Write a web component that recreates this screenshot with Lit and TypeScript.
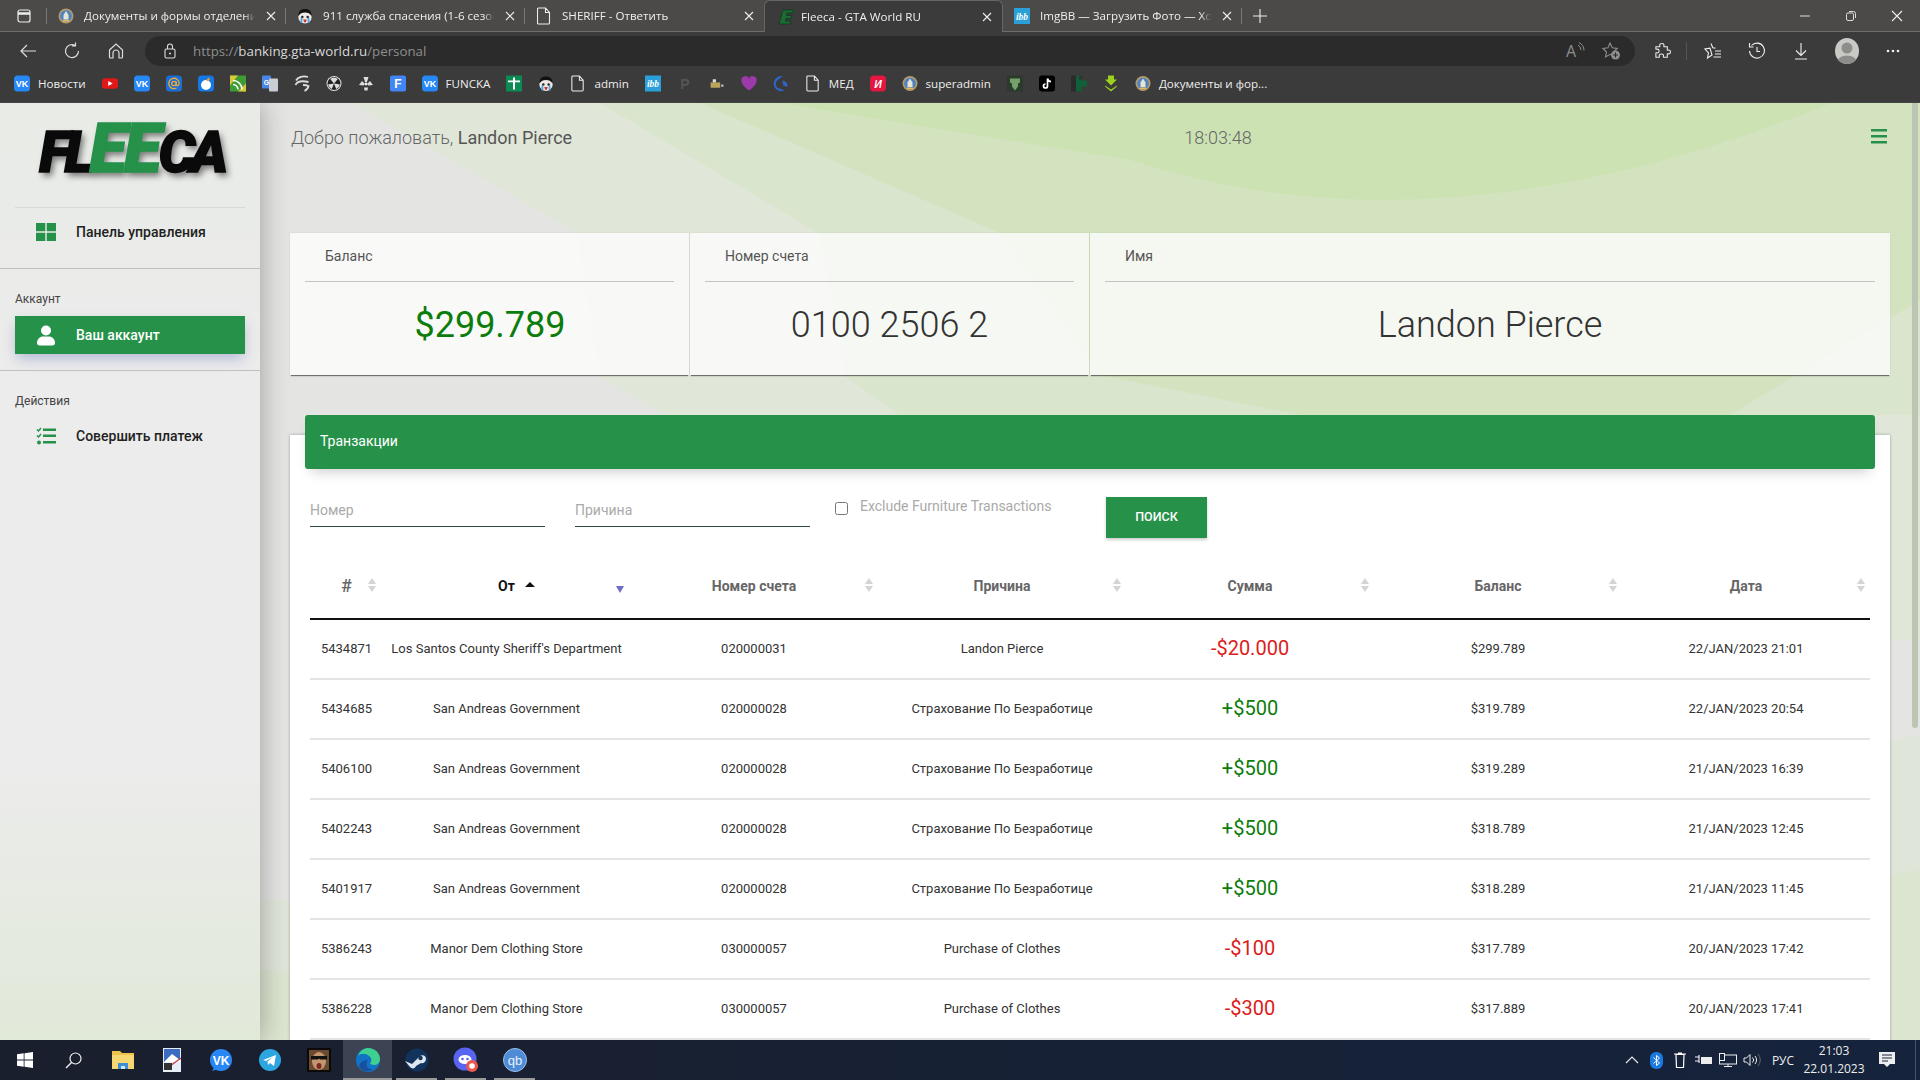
import { LitElement, html, css } from "lit";
import { customElement } from "lit/decorators.js";

const ic: Record<string, any> = {
  seal: html`<svg width="16" height="16" viewBox="0 0 16 16"><circle cx="8" cy="8" r="7.500" fill="#b79a6a"/><circle cx="8" cy="8" r="5.800" fill="#4d83c4"/><path d="M8 3l2.500 4v4.500h-5V7z" fill="#e8e4d2"/><path d="M5 12h6v1.500H5z" fill="#e0bf5a"/></svg>`,
  face: html`<svg width="16" height="16" viewBox="0 0 18 18"><circle cx="9" cy="10" r="7.500" fill="#efe8e4"/><path d="M1.500 9C1.500 3 5 1 9 1s7.500 2 7.500 8c-2-3-4-4-7.500-4S3.500 6 1.500 9z" fill="#111"/><circle cx="6" cy="10" r="1.400" fill="#222"/><circle cx="12" cy="10" r="1.400" fill="#222"/><path d="M4 11h2v6H4zM12 11h2v6h-2z" fill="#4aa6e0"/><path d="M7 13h4l-1 3H8z" fill="#c33"/></svg>`,
  doc: html`<svg width="14" height="18" viewBox="0 0 14 18"><path d="M1.500 1h7l4 4.500V16a1 1 0 0 1-1 1h-10a1 1 0 0 1-1-1V2a1 1 0 0 1 1-1zM8.500 1v4.500h4" fill="none" stroke="#eee" stroke-width="1.100"/></svg>`,
  fleeca: html`<svg width="18" height="18" viewBox="0 0 18 18"><path d="M5 2h11l-1 3H9l-.5 2.500H14l-1 3H8L7.500 13H13l-1 3H1z" fill="#1d6b34" stroke="#0c3a1c" stroke-width=".8"/></svg>`,
  ibb: html`<svg width="16" height="16" viewBox="0 0 17 17"><rect width="17" height="17" fill="#2a9fd8"/><text x="8.500" y="12.500" font-size="10" font-style="italic" font-weight="700" text-anchor="middle" fill="#fff" font-family="Liberation Serif">ibb</text></svg>`,
  vk: html`<svg width="16" height="16" viewBox="0 0 16 16"><rect width="16" height="16" rx="3.500" fill="#2787f5"/><text x="8" y="11.500" font-size="9" font-weight="700" text-anchor="middle" fill="#fff" font-family="Liberation Sans">VK</text></svg>`,
  yt: html`<svg width="16" height="16" viewBox="0 0 18 16"><rect y="2" width="18" height="12" rx="3.500" fill="#e21818"/><path d="M7 5.200l5 2.800-5 2.800z" fill="#fff"/></svg>`,
  at: html`<svg width="16" height="16" viewBox="0 0 16 16"><rect width="16" height="16" rx="3.500" fill="#1c6fd6"/><circle cx="8" cy="8" r="2.200" fill="none" stroke="#f2a92c" stroke-width="1.300"/><path d="M10.200 6v3c0 2 3 1.500 3-1.200A5.200 5.200 0 1 0 10.500 12.500" fill="none" stroke="#f2a92c" stroke-width="1.300"/></svg>`,
  bubble: html`<svg width="16" height="16" viewBox="0 0 16 16"><rect width="16" height="16" rx="3.500" fill="#1678e5"/><circle cx="8" cy="9.500" r="5" fill="#fff"/><path d="M8 4.500l3-2.500 1 2-2 2z" fill="#f29a2e"/></svg>`,
  gr: html`<svg width="16" height="16" viewBox="0 0 16 16"><rect width="16" height="16" fill="#3e9c35"/><path d="M0 0h8L0 10zM16 16H8l8-8z" fill="#d9c93a"/><path d="M3 5a9 9 0 0 1 9 9M3 9a5 5 0 0 1 5 5" fill="none" stroke="#fff" stroke-width="1.500"/></svg>`,
  gt: html`<svg width="16" height="16" viewBox="0 0 16 16"><rect width="9" height="13" rx="1" fill="#4a86e8"/><rect x="7" y="3" width="9" height="13" rx="1" fill="#c9cdd4"/><text x="4.500" y="9" font-size="7" font-weight="700" text-anchor="middle" fill="#fff" font-family="Liberation Sans">G</text></svg>`,
  g: html`<svg width="16" height="16" viewBox="0 0 16 16"><path d="M2 5C4 1.500 9 0 14 1.500M1.500 9.500C3 6 8 5 14.500 6.500M9 9.500c2.500 0 4.500.5 5.500 1-.5 2.500-2 4-4 5" fill="none" stroke="#ddd" stroke-width="1.800"/></svg>`,
  rad: html`<svg width="16" height="16" viewBox="0 0 16 16"><circle cx="8" cy="8" r="7.500" fill="#ddd"/><circle cx="8" cy="8" r="6.500" fill="#222"/><path d="M8 8L4.200 3.500a6 6 0 0 1 7.600 0zM8 8l6 1a6 6 0 0 1-3.800 4.500zM8 8l-2.200 5.500A6 6 0 0 1 2 9z" fill="#ddd"/></svg>`,
  nuke: html`<svg width="16" height="16" viewBox="0 0 16 16"><circle cx="8" cy="8.500" r="1.400" fill="#eee"/><path d="M5.500 1.500h5L9 6.500H7zM1 9.500l3-4 3 3-1.500 1.500zM15 9.500l-3-4-3 3 1.500 1.500zM6 12l4 0-.5 3h-3z" fill="#ddd"/></svg>`,
  f: html`<svg width="16" height="16" viewBox="0 0 16 16"><rect width="16" height="16" rx="2" fill="#4285f4"/><text x="8" y="12.500" font-size="12" font-weight="700" text-anchor="middle" fill="#fff" font-family="Liberation Sans">F</text></svg>`,
  cross: html`<svg width="16" height="16" viewBox="0 0 16 16"><rect width="16" height="16" fill="#0d8a54"/><path d="M2 5h12v1.800H9V14H7V6.800H2zM7 2h2v3H7z" fill="#fff"/></svg>`,
  p: html`<svg width="16" height="16" viewBox="0 0 16 16"><text x="8" y="13" font-size="14" font-weight="700" text-anchor="middle" fill="#555" font-family="Liberation Sans">P</text></svg>`,
  small: html`<svg width="14" height="16" viewBox="0 0 14 16"><rect x="1" y="7" width="9" height="5" fill="#b9a45a"/><rect x="3" y="4" width="3" height="3" fill="#ddd"/><rect x="11" y="9" width="2" height="2" fill="#ccc"/></svg>`,
  heart: html`<svg width="17" height="17" viewBox="0 0 17 17"><path d="M8.500 16C3 11.500.5 9 .5 5.500A4 4 0 0 1 8.500 4a4 4 0 0 1 8 1.500C16.500 9 14 11.500 8.500 16z" fill="#9b3aa8"/></svg>`,
  swirl: html`<svg width="17" height="17" viewBox="0 0 17 17"><path d="M11 1a8 8 0 1 0 1 15L8 14c-3 0-5-2-5-5 0-3 3-6 8-8z" fill="#2f64c8"/><path d="M10 5l1 6 4 1c1-3 0-5-5-7z" fill="#2f64c8"/></svg>`,
  red: html`<svg width="16" height="16" viewBox="0 0 16 16"><rect width="16" height="16" rx="4" fill="#e3173f"/><text x="8" y="12" font-size="10.500" font-weight="700" font-style="italic" text-anchor="middle" fill="#fff" font-family="Liberation Sans">И</text></svg>`,
  shield: html`<svg width="16" height="16" viewBox="0 0 16 16"><rect width="16" height="16" fill="#2c3a2c"/><path d="M3 3h10v4l-2 1v3l-3 4-3-4V8L3 7z" fill="#74a06c"/></svg>`,
  tiktok: html`<svg width="16" height="16" viewBox="0 0 16 16"><rect width="16" height="16" rx="3" fill="#000"/><path d="M8.500 3v7.500a2 2 0 1 1-2-2M8.500 3c.3 2 1.500 3 3.500 3.200" fill="none" stroke="#fff" stroke-width="1.700"/></svg>`,
  dk: html`<svg width="16" height="16" viewBox="0 0 16 16"><rect width="5" height="16" fill="#2b2b2b"/><rect x="5" width="6" height="16" fill="#0f5f38"/><rect x="9" y="5" width="7" height="6" fill="#0f5f38"/><rect x="8" width="3" height="4" fill="#333"/></svg>`,
  arrow: html`<svg width="16" height="16" viewBox="0 0 16 16"><path d="M5 0h6v4h3L8 10 2 4h3zM2 11l6 5 6-5v-1l-6 4-6-4z" fill="#9ed11f"/></svg>`,
};

const bookmarks: [string, string?][] = [
  ["vk", "Новости"], ["yt"], ["vk"], ["at"], ["bubble"], ["gr"], ["gt"], ["g"], ["rad"], ["nuke"], ["f"],
  ["vk", "FUNCKA"], ["cross"], ["face"], ["doc", "admin"], ["ibb"], ["p"], ["small"], ["heart"], ["swirl"],
  ["doc", "МЕД"], ["red"], ["seal", "superadmin"], ["shield"], ["tiktok"], ["dk"], ["arrow"], ["seal", "Документы и фор..."],
];

const tabs = [
  { icon: "seal", t: "Документы и формы отделения", c: "" },
  { icon: "face", t: "911 служба спасения (1-6 сезон", c: "" },
  { icon: "doc", t: "SHERIFF - Ответить", c: "docTab noSep" },
  { icon: "fleeca", t: "Fleeca - GTA World RU", c: "active" },
  { icon: "ibb", t: "ImgBB — Загрузить Фото — Хос", c: "" },
];

const SA = "San Andreas Government", MD = "Manor Dem Clothing Store", SI = "Страхование По Безработице", PC = "Purchase of Clothes";
const rows = [
  ["5434871", "Los Santos County Sheriff's Department", "020000031", "Landon Pierce", "-$20.000", "$299.789", "22/JAN/2023 21:01"],
  ["5434685", SA, "020000028", SI, "+$500", "$319.789", "22/JAN/2023 20:54"],
  ["5406100", SA, "020000028", SI, "+$500", "$319.289", "21/JAN/2023 16:39"],
  ["5402243", SA, "020000028", SI, "+$500", "$318.789", "21/JAN/2023 12:45"],
  ["5401917", SA, "020000028", SI, "+$500", "$318.289", "21/JAN/2023 11:45"],
  ["5386243", MD, "030000057", PC, "-$100", "$317.789", "20/JAN/2023 17:42"],
  ["5386228", MD, "030000057", PC, "-$300", "$317.889", "20/JAN/2023 17:41"],
];
const heads = ["#", "От", "Номер счета", "Причина", "Сумма", "Баланс", "Дата"];

@customElement("app-root")
export class AppRoot extends LitElement {
  static styles = css`
    :host { display: flex; flex-direction: column; width: 1920px; height: 1080px; overflow: hidden; font-family: Roboto, "Liberation Sans", sans-serif; background: #3b3b3b; }
    svg { display: block; flex: none; }
    /* browser chrome */
    .strip { height: 32px; background: #4b4a48; box-sizing: border-box; border-bottom: 1px solid #6e6e6a; display: flex; align-items: stretch; flex: none; color: #eee; font: 11.600px "Open Sans", sans-serif; }
    .winbtn { width: 47px; flex: none; display: flex; align-items: center; justify-content: center; position: relative; }
    .winbtn::after, .tab::after { content: ""; position: absolute; right: 0; top: 8px; height: 16px; width: 1px; background: #777; }
    .tab { width: 239px; flex: none; box-sizing: border-box; position: relative; display: flex; align-items: center; gap: 10px; padding: 0 9px 0 11px; }
    .tab .name { flex: 1; min-width: 0; white-space: nowrap; -webkit-mask: linear-gradient(90deg, #000 94%, transparent) no-repeat; mask: linear-gradient(90deg, #000 94%, transparent) no-repeat; }
    .tab.docTab { padding-left: 12px; gap: 11px; }
    .tab.active { background: #3b3b3b; height: 32px; border: 1px solid #666; border-bottom: 0; border-radius: 6px 6px 0 0; padding-left: 13px; gap: 5px; }
    .tab.active::after, .tab.noSep::after { display: none; }
    .plus { width: 36px; display: flex; align-items: center; justify-content: center; }
    .spacer { flex: 1; }
    .wc { display: flex; align-items: center; justify-content: center; width: 46px; }
    .toolbar { height: 34px; flex: none; display: flex; align-items: flex-end; background: #3b3b3b; }
    .tb { width: 44px; height: 30px; display: flex; align-items: center; justify-content: center; flex: none; }
    .nav { display: flex; padding-left: 6px; width: 145px; flex: none; box-sizing: border-box; }
    .addr { width: 1490px; height: 30px; box-sizing: border-box; flex: none; background: #2b2b2b; border-radius: 15px; display: flex; align-items: center; padding: 0 13px 0 18px; gap: 16px; color: #8e8e8e; font: 13.300px "Open Sans", sans-serif; }
    .addr b { font-weight: 400; color: #d8d8d8; }
    .addr .url { flex: 1; }
    .addr .ai { display: flex; gap: 16px; align-items: center; }
    .tright { display: flex; align-items: center; height: 30px; padding-left: 6px; }
    .vsep { width: 1px; height: 18px; background: #555; margin: 0 4px 0 1px; flex: none; }
    .tb.av { width: 48px; }
    .avatar { width: 24px; height: 26px; border-radius: 50%; background: #c9c9c5; overflow: hidden; }
    .bm { height: 37px; box-sizing: border-box; flex: none; background: #3b3b3b; border-bottom: 1px solid #444; padding: 0 0 2px 6px; display: flex; align-items: center; color: #eee; font: 11.600px "Open Sans", sans-serif; }
    .bi { display: flex; align-items: center; gap: 8px; padding: 0 8px; white-space: nowrap; justify-content: center; height: 100%; }
    .bi svg { width: 16px; height: 17px; }
    /* page */
    .page { flex: 1; min-height: 0; display: flex; position: relative; overflow: hidden; }
    .bg { position: absolute; left: 0; top: 0; }
    .side { position: relative; width: 260px; flex: none; box-shadow: 0 0 26px rgba(0, 0, 0, .32); background: linear-gradient(180deg, #e8ebe6 0, #ececec 30%, #ececec 70%, #e1e9d9 100%); display: flex; flex-direction: column; color: #333; }
    .logo { height: 105px; box-sizing: border-box; margin: 0 15px; border-bottom: 1px solid #d8d8d8; display: flex; justify-content: center; align-items: center; padding: 0 0 13px 2px; }
    .mark { font: italic 900 58px/1 Roboto, sans-serif; color: #0a0a0a; letter-spacing: -5.500px; text-shadow: 3px 4px 6px rgba(0, 0, 0, .5); -webkit-text-stroke: 1.500px #0a0a0a; }
    .mark em { color: #259149; font-size: 69px; -webkit-text-stroke: 1.500px #259149; letter-spacing: -3px; }
    .item { height: 38px; margin: 0 15px; display: flex; align-items: center; font-size: 14px; font-weight: 500; color: #222; }
    .item .ii { width: 61px; padding-left: 21px; box-sizing: border-box; flex: none; }
    .item.first { margin-top: 5px; }
    .item.on { background: #259149; color: #fff; box-shadow: 0 6px 14px -2px rgba(60, 80, 170, .35); }
    .hr { height: 1px; background: #c0c0c0; margin-top: 16px; }
    .hr.a { margin-top: 17px; }
    .cap { font-size: 12px; color: #444; margin: 22px 15px 0; height: 25px; line-height: 16px; }
    .cap.two { height: 24px; }
    .main { position: relative; flex: 1; min-width: 0; padding: 0 30px; }
    .top { height: 130px; display: grid; grid-template-columns: 827px 200px 1fr; padding: 23px 0 0 1px; box-sizing: border-box; font-size: 18px; line-height: 24px; font-weight: 300; color: #666; }
    .top strong { font-weight: 400; color: #555; }
    .clock { text-align: center; }
    .burger { justify-self: end; margin: 3px 3px 0 0; }
    .cards { display: grid; grid-template-columns: 399px 399px 1fr; gap: 1px; height: 142px; }
    .card { background: rgba(255, 255, 255, .76); box-shadow: 0 2px 1px -1px rgba(0, 0, 0, .5), 0 0 1px rgba(0, 0, 0, .14); padding: 0 15px; display: flex; flex-direction: column; }
    .card h4 { margin: 0; height: 49px; box-sizing: border-box; border-bottom: 1px solid #c4c4c4; padding-left: 20px; font-size: 14px; font-weight: 400; line-height: 46px; color: #555; }
    .card .val { flex: 1; display: flex; align-items: center; justify-content: center; padding-bottom: 8px; font-size: 36px; font-weight: 300; color: #333; }
    .card .val.g { color: #0c7d0c; font-weight: 400; padding-left: 1px; }
    .panel { margin-top: 60px; background: #fff; padding: 0 15px 40px; box-shadow: 0 0 3px rgba(0, 0, 0, .3); }
    .head { position: relative; top: -20px; margin-bottom: -20px; height: 54px; line-height: 52px; padding-left: 15px; background: #259149; color: #fff; border-radius: 3px; font-size: 14px; box-shadow: 0 8px 14px -6px rgba(0, 0, 0, .22); }
    .filters { display: flex; align-items: flex-start; height: 84px; box-sizing: border-box; padding: 26px 5px 0; }
    .inp { width: 235px; height: 32px; box-sizing: border-box; border-bottom: 1px solid #2f4a44; font-size: 14px; color: #aaa; line-height: 30px; }
    .inp.b { margin-left: 30px; }
    .chk { margin-left: 25px; width: 271px; display: flex; gap: 12px; font-size: 14px; color: #aaa; line-height: 22px; }
    .box { width: 13px; height: 13px; box-sizing: border-box; border: 1px solid #767676; border-radius: 2.500px; margin-top: 7px; background: #fff; flex: none; }
    .btn { width: 101px; height: 41px; box-sizing: border-box; padding-bottom: 2px; margin-top: 2px; background: #259149; color: #fff; display: flex; align-items: center; justify-content: center; font-size: 12.500px; font-weight: 500; box-shadow: 0 2px 3px rgba(0, 0, 0, .2); }
    table { width: 1560px; margin-left: 5px; border-collapse: collapse; table-layout: fixed; }
    th { height: 65px; position: relative; padding: 0; font-size: 14px; font-weight: 700; color: #666; border-bottom: 2px solid #111; text-align: center; }
    th.hash { font-size: 18px; font-weight: 500; }
    th.hash .sort { right: 7px; }
    th.from { color: #111; }
    th.from span { position: relative; }
    td { height: 56px; padding: 0 0 2px; box-sizing: content-box; border-bottom: 2px solid #e4e4e4; text-align: center; font-size: 13px; color: #333; white-space: nowrap; }
    td.amt { font-size: 20px; }
    td.neg { color: #dc1c1c; }
    td.pos { color: #0c7d0c; }
    .sort { position: absolute; right: 5px; top: 25px; width: 8px; height: 14px; }
    .sort i, .sort b { position: absolute; left: 0; border-left: 4px solid transparent; border-right: 4px solid transparent; }
    .sort i { top: 0; border-bottom: 6px solid #d4d4d4; }
    .sort b { bottom: 0; border-top: 6px solid #d4d4d4; }
    .asc { position: absolute; left: calc(100% + 10px); top: 4px; border-left: 5px solid transparent; border-right: 5px solid transparent; border-bottom: 5px solid #111; }
    .desc { position: absolute; right: 6px; top: 33px; border-left: 4px solid transparent; border-right: 4px solid transparent; border-top: 7px solid #6f6fc9; }
    .thumb { position: absolute; right: 2px; top: 0; width: 6px; height: 625px; background: #bcc4b4; border-radius: 0 0 3px 3px; }
    /* taskbar */
    .task { height: 40px; flex: none; background: linear-gradient(90deg, #1a1f2d, #15233c); display: flex; align-items: center; position: relative; color: #eee; font: 12px "Open Sans", sans-serif; }
    .ticon { width: 49px; height: 40px; display: flex; align-items: center; justify-content: center; flex: none; box-sizing: border-box; position: relative; }
    .ticon.on { background: #3c4352; }
    .ticon.run::after { content: ""; position: absolute; left: 4px; right: 4px; bottom: 0; height: 2px; background: #9a9a9a; }
    .ticon.on::after { left: 0; right: 0; }
    .tray { display: flex; align-items: center; margin-left: auto; height: 100%; }
    .tr { width: 24px; display: flex; justify-content: center; }
    .lang { width: 38px; text-align: center; }
    .time { width: 64px; text-align: center; line-height: 18px; white-space: nowrap; }
    .note { width: 40px; margin: 0 8px 0 1px; display: flex; justify-content: center; }
    .edge { width: 1px; height: 40px; background: #4a5262; margin-right: 4px; }
  `;

  render() {
    return html`
      <div class="strip">
        <div class="winbtn"><svg width="16" height="16" viewBox="0 0 16 16"><rect x="2" y="2" width="12" height="12" rx="2" fill="none" stroke="#eee" stroke-width="1.200"/><path d="M2 5.500h12" stroke="#eee" stroke-width="2.500"/></svg></div>
        ${tabs.map((t) => html`<div class="tab ${t.c}">${ic[t.icon]}<span class="name">${t.t}</span>
          <svg width="12" height="12" viewBox="0 0 12 12"><path d="M2 2l8 8M10 2l-8 8" stroke="#eee" stroke-width="1.100"/></svg></div>`)}
        <div class="plus"><svg width="14" height="14" viewBox="0 0 14 14"><path d="M7 0v14M0 7h14" stroke="#eee" stroke-width="1.100"/></svg></div>
        <div class="spacer"></div>
        <div class="wc"><svg width="12" height="12" viewBox="0 0 12 12"><path d="M1 6h10" stroke="#ddd"/></svg></div>
        <div class="wc"><svg width="12" height="12" viewBox="0 0 12 12"><rect x="1.500" y="3" width="7" height="7.500" rx="1.500" fill="none" stroke="#ddd"/><path d="M4 1.500h4.500a2 2 0 0 1 2 2V8" fill="none" stroke="#ddd"/></svg></div>
        <div class="wc"><svg width="12" height="12" viewBox="0 0 12 12"><path d="M1 1l10 10M11 1L1 11" stroke="#eee" stroke-width="1.100"/></svg></div>
      </div>
      <div class="toolbar">
        <div class="nav">
          <div class="tb"><svg width="18" height="16" viewBox="0 0 18 16"><path d="M17 8H2M8 2L2 8l6 6" fill="none" stroke="#ddd" stroke-width="1.200"/></svg></div>
          <div class="tb"><svg width="18" height="18" viewBox="0 0 18 18"><path d="M15.500 9A6.500 6.500 0 1 1 12 3.300M12.500 .5v3.500H9" fill="none" stroke="#ddd" stroke-width="1.200"/></svg></div>
          <div class="tb"><svg width="18" height="18" viewBox="0 0 18 18"><path d="M2.500 8L9 2l6.500 6v7a1 1 0 0 1-1 1H12v-5a3 3 0 0 0-6 0v5H3.500a1 1 0 0 1-1-1z" fill="none" stroke="#ddd" stroke-width="1.200"/></svg></div>
        </div>
        <div class="addr">
          <svg width="14" height="16" viewBox="0 0 14 16"><rect x="2" y="6" width="10" height="9" rx="1.500" fill="none" stroke="#ddd" stroke-width="1.100"/><path d="M4.500 6V3.500a2.500 2.500 0 0 1 5 0V6" fill="none" stroke="#ddd" stroke-width="1.100"/><circle cx="7" cy="10.500" r="1" fill="#ddd"/></svg>
          <span class="url">https://<b>banking.gta-world.ru</b>/personal</span>
          <div class="ai">
            <svg width="20" height="24" viewBox="0 0 20 24"><text x="0" y="18" font-size="16" fill="#8e8e8e" font-family="Open Sans">A</text><path d="M12 6a6 6 0 0 1 3 5M13 3.500a9 9 0 0 1 5 8" fill="none" stroke="#8e8e8e"/></svg>
            <svg width="20" height="18" viewBox="0 0 20 18"><path d="M8 1l2.200 4.800 5 .6-3.700 3.500 1 5L8 12.300 3.500 15l1-5L1 6.400l5-.6z" fill="none" stroke="#8e8e8e" stroke-width="1.100"/><circle cx="13.500" cy="13" r="4.500" fill="#8e8e8e"/><path d="M13.500 10.500v5M11 13h5" stroke="#2b2b2b"/></svg>
          </div>
        </div>
        <div class="tright">
          <div class="tb"><svg width="18" height="18" viewBox="0 0 18 18"><path d="M6 3.500C6 1 10.500 1 10.500 3.500c0 .8-.5 1.200 0 1.500h3.500v3.500c.4.500.8 0 1.500 0 2.500 0 2.500 4 0 4-.7 0-1.100-.5-1.500 0V16h-4c-.5-.5 0-.8 0-1.500 0-2.500-4.500-2.500-4.500 0 0 .7.500 1 0 1.500H2v-4.500c.5-.5 1 0 1.500 0 2.500 0 2.500-4 0-4C3 7.500 2.500 8 2 7.500V5h4c.3-.5 0-.8 0-1.500z" fill="none" stroke="#eee" stroke-width="1.100" transform="scale(.95)"/></svg></div>
          <div class="vsep"></div>
          <div class="tb"><svg width="18" height="18" viewBox="0 0 18 18"><path d="M7 1.500l1.800 4.300 2.700.3M8 13l-4.500 3 1-5.200L1 7l5-.9zM11 9h6M11 12h6M9.500 15h7.500" fill="none" stroke="#eee" stroke-width="1.100"/></svg></div>
          <div class="tb"><svg width="18" height="18" viewBox="0 0 18 18"><path d="M3.500 3.500A7.500 7.500 0 1 1 1.500 9M1.500 1v4h4M9 5v4.500h3" fill="none" stroke="#eee" stroke-width="1.100"/></svg></div>
          <div class="tb"><svg width="14" height="18" viewBox="0 0 14 18"><path d="M7 1v12M2 8.500L7 13.500l5-5M1 17h12" fill="none" stroke="#eee" stroke-width="1.100"/></svg></div>
          <div class="tb av"><div class="avatar"><svg width="24" height="26" viewBox="0 0 24 26"><circle cx="12" cy="10" r="5.500" fill="#8d8d8b"/><ellipse cx="12" cy="24" rx="10" ry="6.500" fill="#8d8d8b"/></svg></div></div>
          <div class="tb"><svg width="14" height="4" viewBox="0 0 14 4"><circle cx="2" cy="2" r="1.300" fill="#eee"/><circle cx="7" cy="2" r="1.300" fill="#eee"/><circle cx="12" cy="2" r="1.300" fill="#eee"/></svg></div>
        </div>
      </div>
      <div class="bm">${bookmarks.map(([i, t]) => html`<div class="bi">${ic[i]}${t ? html`<span>${t}</span>` : ""}</div>`)}</div>

      <div class="page">
        <svg class="bg" width="1920" height="937" viewBox="0 103 1920 937">
          <rect y="103" width="1920" height="937" fill="#e4e5e3"/>
          <path d="M0 1040V900L800 900 1920 735V1040z" fill="#e0e5da"/>
          <path d="M0 1040V960L1000 1000 1920 870V1040z" fill="#dce5d0"/>
          <path d="M260 103H352L577 233 600 377 665 415 1000 640H1920V430L1920 103z" fill="#e0e6d8"/>
          <path d="M600 103L818 233 846 377 900 415H1920V103z" fill="#d9e5cc"/>
          <path d="M700 103L1000 233 1100 375 1300 415H1730L1920 300V103z" fill="#d3e3c0"/>
          <path d="M780 103L1130 160Q1440 262 1832 103z" fill="#cce2b3"/>
        </svg>
        <aside class="side">
          <div class="logo"><span class="mark">FL<em>EE</em>CA</span></div>
          <div class="item first"><div class="ii"><svg width="20" height="18" viewBox="0 0 20 18"><path d="M0 0h9.300v8.300H0zM10.700 0H20v8.300h-9.300zM0 9.700h9.300V18H0zM10.700 9.700H20V18h-9.300z" fill="#259149"/></svg></div>Панель управления</div>
          <div class="hr a"></div>
          <div class="cap">Аккаунт</div>
          <div class="item on"><div class="ii"><svg width="20" height="21" viewBox="0 0 20 21"><circle cx="10" cy="5.500" r="5" fill="#fff"/><path d="M1 18c0-4 3-6.500 6-6.500h6c3 0 6 2.500 6 6.500 0 1.500-1 2.500-2.500 2.500h-13C2 20.500 1 19.500 1 18z" fill="#fff"/></svg></div>Ваш аккаунт</div>
          <div class="hr"></div>
          <div class="cap two">Действия</div>
          <div class="item"><div class="ii"><svg width="20" height="18" viewBox="0 0 20 18"><path d="M1 2.500L2.500 4 5 1M1 8.500l1.500 1.500L5 7" fill="none" stroke="#259149" stroke-width="1.500"/><circle cx="3" cy="15.500" r="2" fill="#259149"/><path d="M7 1.500h13v2.500H7zM7 7.500h13v2.500H7zM7 14h13v2.500H7z" fill="#259149"/></svg></div>Совершить платеж</div>
        </aside>
        <main class="main">
          <div class="top">
            <div>Добро пожаловать, <strong>Landon Pierce</strong></div>
            <div class="clock">18:03:48</div>
            <div class="burger"><svg width="16" height="15" viewBox="0 0 16 15"><path d="M0 0h16v2.500H0zM0 6h16v2.500H0zM0 12h16v2.500H0z" fill="#259149"/></svg></div>
          </div>
          <div class="cards">
            <div class="card"><h4>Баланс</h4><div class="val g">$299.789</div></div>
            <div class="card"><h4>Номер счета</h4><div class="val">0100 2506 2</div></div>
            <div class="card"><h4>Имя</h4><div class="val">Landon Pierce</div></div>
          </div>
          <section class="panel">
            <div class="head">Транзакции</div>
            <div class="filters">
              <div class="inp">Номер</div>
              <div class="inp b">Причина</div>
              <div class="chk"><span class="box"></span><span>Exclude Furniture Transactions</span></div>
              <div class="btn">ПОИСК</div>
            </div>
            <table>
              <colgroup><col width="73"/><col width="247"/><col width="248"/><col width="248"/><col width="248"/><col width="248"/><col width="248"/></colgroup>
              <thead><tr>
                ${heads.map((h, i) => i === 1
                  ? html`<th class="from"><span>${h}<em class="asc"></em></span><em class="desc"></em></th>`
                  : html`<th class="${i === 0 ? "hash" : ""}">${h}<span class="sort"><i></i><b></b></span></th>`)}
              </tr></thead>
              <tbody>${rows.map((r) => html`<tr>${r.map((c, i) => html`<td class="${i === 4 ? (c[0] === "-" ? "amt neg" : "amt pos") : ""}">${c}</td>`)}</tr>`)}</tbody>
            </table>
          </section>
          <div class="thumb"></div>
        </main>
      </div>

      <div class="task">
        <div class="ticon"><svg width="16" height="16" viewBox="0 0 16 16"><path d="M0 2.300l6.700-1v6.200H0zM7.500 1.200L16 0v7.500H7.500zM0 8.500h6.700v6.200l-6.700-1zM7.500 8.500H16V16l-8.500-1.200z" fill="#fff"/></svg></div>
        <div class="ticon"><svg width="17" height="17" viewBox="0 0 17 17"><circle cx="10.500" cy="6.500" r="5.500" fill="none" stroke="#eee" stroke-width="1.200"/><path d="M6.500 10.500L1 16" stroke="#eee" stroke-width="1.400"/></svg></div>
        <div class="ticon"><svg width="22" height="20" viewBox="0 0 22 20"><path d="M0 1h8l2 2h12v16H0z" fill="#f0c14b"/><path d="M0 5h22v14H0z" fill="#f7d774"/><path d="M6 13h10v6H6z" fill="#3c8fd6"/><path d="M9 16h4v3H9z" fill="#cfe7f8"/></svg></div>
        <div class="ticon"><svg width="18" height="24" viewBox="0 0 18 24"><rect width="18" height="24" fill="#e8eef6"/><rect x="1" y="1" width="16" height="13" fill="#3b6cc0"/><path d="M1 14L9 6l8 6v2z" fill="#fff"/><path d="M3 21L18 10" stroke="#c33" stroke-width="1.200"/><rect x="1" y="15" width="8" height="7" fill="#333"/></svg></div>
        <div class="ticon"><svg width="24" height="24" viewBox="0 0 24 24"><circle cx="12" cy="12" r="11" fill="#2787f5"/><path d="M3 23l3-5 3 3z" fill="#2787f5"/><text x="12" y="16.500" font-size="12" font-weight="700" text-anchor="middle" fill="#fff" font-family="Liberation Sans">VK</text></svg></div>
        <div class="ticon"><svg width="22" height="22" viewBox="0 0 22 22"><circle cx="11" cy="11" r="11" fill="#2ca5e0"/><path d="M4 11l13-5-2 11-4-3-2 2-.5-3.500 5.500-4.500-7 4z" fill="#fff"/></svg></div>
        <div class="ticon"><svg width="24" height="24" viewBox="0 0 24 24"><rect width="24" height="24" fill="#0c0a08"/><rect x="2" y="2" width="20" height="20" fill="#6b4a32"/><ellipse cx="12" cy="13" rx="7" ry="9" fill="#c39670"/><path d="M4 8h16v3.500h-7l-1-1-1 1H4z" fill="#111"/><ellipse cx="12" cy="18" rx="2.500" ry="3" fill="#7a2a20"/></svg></div>
        <div class="ticon on run"><svg width="24" height="24" viewBox="0 0 24 24"><circle cx="12" cy="12" r="12" fill="#1173c5"/><path d="M2 8C4 2 9 0 12 0c7 0 12 5 12 11 0 4-3 6-6 6-2 0-4-1-4-2 2-1 2-5-1-7C10 5 4 5 2 8z" fill="#3fcf8e"/><path d="M3 18c2 4 6 6 10 5 2-.5 3-1.500 3.500-2-3 .5-6-1-6-5 0-2 1-3 2-3.500-4-1-8 1-9.500 5.500z" fill="#1a4f9e"/></svg></div>
        <div class="ticon run"><svg width="24" height="24" viewBox="0 0 24 24"><circle cx="12" cy="12" r="11.500" fill="#12335c"/><path d="M0 13l7 3 3-3 5-5c3-2 6 0 6 3 0 3-3 5-5 4l-5 3c-1 3-4 3-6 1z" fill="#dfe7ef"/><circle cx="15.500" cy="10" r="2.200" fill="#12335c"/></svg></div>
        <div class="ticon run"><svg width="26" height="26" viewBox="0 0 26 26"><circle cx="12" cy="12" r="11.500" fill="#5865f2"/><ellipse cx="12" cy="12.500" rx="6.500" ry="4.500" fill="#fff"/><circle cx="9.500" cy="12" r="1.300" fill="#5865f2"/><circle cx="14.500" cy="12" r="1.300" fill="#5865f2"/><circle cx="19" cy="19" r="6" fill="#e9574f"/><circle cx="19" cy="19" r="2.800" fill="#fff"/></svg></div>
        <div class="ticon run"><svg width="24" height="24" viewBox="0 0 24 24"><circle cx="12" cy="12" r="11.500" fill="#4f8ad6" stroke="#9cc1ee"/><text x="12" y="16.500" font-size="13" text-anchor="middle" fill="#e8f0fb" font-family="Liberation Sans">qb</text></svg></div>
        <div class="tray">
          <div class="tr"><svg width="14" height="8" viewBox="0 0 14 8"><path d="M1 7l6-6 6 6" fill="none" stroke="#eee" stroke-width="1.100"/></svg></div>
          <div class="tr"><svg width="13" height="17" viewBox="0 0 13 17"><rect width="13" height="17" rx="6" fill="#1b7ae0"/><path d="M3.500 5.500l6 5.500-3 2.500v-10l3 2.500-6 5.500" fill="none" stroke="#fff"/></svg></div>
          <div class="tr"><svg width="12" height="16" viewBox="0 0 12 16"><path d="M2 2.500h8l-.5 13h-7zM0 2h12M4 1h4" fill="none" stroke="#fff" stroke-width="1.200"/></svg></div>
          <div class="tr"><svg width="18" height="12" viewBox="0 0 18 12"><rect x="6" y="3" width="11" height="7" fill="#eee"/><path d="M0 3h4M0 7h4M4 1v8" stroke="#eee" stroke-width="1.200"/></svg></div>
          <div class="tr"><svg width="18" height="14" viewBox="0 0 18 14"><rect x=".5" y="2" width="17" height="9" fill="none" stroke="#eee"/><rect x=".5" y=".5" width="5" height="7" fill="#16233c" stroke="#eee"/><path d="M9 11v2M5 13.500h8" stroke="#eee"/></svg></div>
          <div class="tr"><svg width="18" height="14" viewBox="0 0 18 14"><path d="M1 5h2.500L7 1.500v11L3.500 9H1z" fill="none" stroke="#eee"/><path d="M9.500 4.500a3.500 3.500 0 0 1 0 5M12 3a6 6 0 0 1 0 8" fill="none" stroke="#eee"/><path d="M15 1a9 9 0 0 1 0 12" fill="none" stroke="#666"/></svg></div>
          <div class="lang">РУС</div>
          <div class="time">21:03<br/>22.01.2023</div>
          <div class="note"><svg width="16" height="16" viewBox="0 0 16 16"><path d="M0 0h16v12h-5l-3 3-3-3H0z" fill="#eee"/><path d="M3 3h10M3 6h10M3 9h6" stroke="#16233c"/></svg></div>
          <div class="edge"></div>
        </div>
      </div>
    `;
  }
}
